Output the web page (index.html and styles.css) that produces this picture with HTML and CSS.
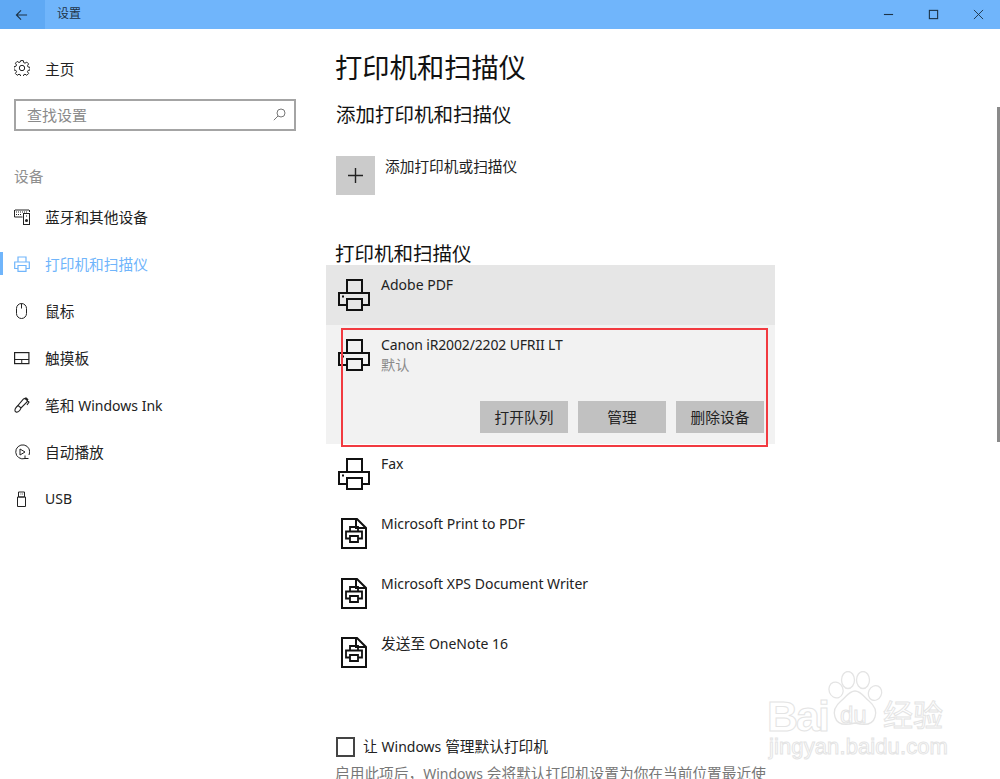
FILE: index.html
```html
<!DOCTYPE html>
<html lang="zh-CN">
<head>
<meta charset="utf-8">
<title>设置</title>
<link rel="stylesheet" href="styles.css">
</head>
<body>
<svg class="sprite" width="0" height="0" aria-hidden="true">
  <symbol id="printer" viewBox="0 0 32 32"><path d="M9 13V1h15v12M9 26H1V14h30v12h-7M9 20h15v11H9z" fill="none" stroke="currentColor" stroke-width="2"/><rect x="4" y="16.500" width="2" height="2" fill="currentColor"/></symbol>
  <symbol id="docprinter" viewBox="0 0 26 31"><path d="M1 1h15l9 9v20H1zM15 1v9h10" fill="none" stroke="currentColor" stroke-width="2"/><path d="M9 13.500V9h8v4.500M9 20.500H5v-7h16v7h-4M9 18h8v6H9z" fill="none" stroke="currentColor" stroke-width="1.800"/></symbol>
  <symbol id="smallprinter" viewBox="0 0 16 16"><path d="M4 6V1h8v5M4 12.500H.7V6h14.600v6.500H12M4 9.500h8v5.800H4z" fill="none" stroke="currentColor" stroke-width="1.200"/></symbol>
</svg>
<div class="window">
  <header class="titlebar">
    <div class="back"><svg class="back-icon" viewBox="0 0 14 12"><path d="M13 6H1.500M6.500 1 1.500 6l5 5" fill="none" stroke="currentColor" stroke-width="1.200"/></svg></div>
    <div class="win-title">设置</div>
    <div class="controls">
      <svg class="ctl" viewBox="0 0 12 12"><path d="M1 6h10" stroke="currentColor" stroke-width="1.200"/></svg>
      <svg class="ctl" viewBox="0 0 12 12"><rect x="1.500" y="1.500" width="9" height="9" fill="none" stroke="currentColor" stroke-width="1.200"/></svg>
      <svg class="ctl" viewBox="0 0 12 12"><path d="M1 1l10 10M11 1 1 11" stroke="currentColor" stroke-width="1"/></svg>
    </div>
  </header>
  <div class="layout">
    <nav class="sidebar">
      <div class="nav-item home">
        <svg class="nav-icon" viewBox="0 0 16 16"><path d="M6.700.6h2.600l.4 2 1.300.6 1.800-1.100 1.800 1.800-1.100 1.800.6 1.300 2 .4v2.600l-2 .4-.6 1.300 1.100 1.800-1.800 1.800-1.800-1.100-1.300.6-.4 2H6.700l-.4-2-1.300-.6-1.800 1.100-1.800-1.800 1.100-1.800-.6-1.300-2-.4V6.700l2-.4.6-1.300-1.100-1.800 1.800-1.800 1.800 1.100 1.300-.6z" fill="none" stroke="currentColor"/><circle cx="8" cy="8" r="2.700" fill="none" stroke="currentColor"/></svg>
        <span>主页</span>
      </div>
      <div class="search">
        <span class="search-text">查找设置</span>
        <svg class="search-icon" viewBox="0 0 13 13"><circle cx="8" cy="5" r="4" fill="none" stroke="currentColor"/><path d="M5 8 .8 12.200" stroke="currentColor"/></svg>
      </div>
      <div class="section-label">设备</div>
      <div class="nav-item">
        <svg class="nav-icon" viewBox="0 0 16 16"><path d="M1 1h14M.5 1v7h8M15.500 1v2" fill="none" stroke="currentColor"/><rect x="9.500" y="4.500" width="6" height="11" fill="none" stroke="currentColor"/><path d="M2 3h1M4 3h1M6 3h1M8 3h1M10 3h1M12 3h1M2 5.500h1M4 5.500h1M6 5.500h1" stroke="currentColor"/><circle cx="12.500" cy="11.500" r="1.500" fill="currentColor"/><rect x="12" y="6.500" width="1" height="1" fill="currentColor"/></svg>
        <span>蓝牙和其他设备</span>
      </div>
      <div class="nav-item active">
        <svg class="nav-icon" viewBox="0 0 16 16"><use href="#smallprinter"/></svg>
        <span>打印机和扫描仪</span>
      </div>
      <div class="nav-item">
        <svg class="nav-icon" viewBox="0 0 16 16"><path d="M7.500 5.500V.5M2.500 5.500a5 5 0 0 1 10 0v5a5 5 0 0 1-10 0z" fill="none" stroke="currentColor"/></svg>
        <span>鼠标</span>
      </div>
      <div class="nav-item">
        <svg class="nav-icon" viewBox="0 0 16 16"><rect x=".6" y="2.600" width="14.300" height="11" fill="none" stroke="currentColor" stroke-width="1.200"/><path d="M.5 9.500h14.500M7.750 9.500v4" stroke="currentColor" fill="none"/></svg>
        <span>触摸板</span>
      </div>
      <div class="nav-item">
        <svg class="nav-icon" viewBox="0 0 16 16"><path d="M9.500 2 12 .8 13.800 2.500 13 5 7 11l-3-2.500zM11 1.500l4 3.500-2 3M4 8.500 2.500 10c-2 2-2 4.500-.5 5s3-.5 4-2l1-2" fill="none" stroke="currentColor" stroke-width="1.100"/></svg>
        <span>笔和 <span class="latin">Windows Ink</span></span>
      </div>
      <div class="nav-item">
        <svg class="nav-icon" viewBox="0 0 16 16"><path d="M11 14.500a7 7 0 1 1 4-3.500M11 11.500v3h3.500" fill="none" stroke="currentColor"/><path d="M6 5l5 3-5 3z" fill="none" stroke="currentColor"/></svg>
        <span>自动播放</span>
      </div>
      <div class="nav-item">
        <svg class="nav-icon" viewBox="0 0 16 16"><path d="M4.500 1h6v5h-6zM3.500 6h8v9.500h-8zM6.500 3h.8M8.300 3h.8" fill="none" stroke="currentColor"/></svg>
        <span class="latin">USB</span>
      </div>
    </nav>
    <main class="content">
      <h1 class="page-title">打印机和扫描仪</h1>
      <h2 class="section-title">添加打印机和扫描仪</h2>
      <div class="add-row">
        <div class="add-box"><svg class="plus" viewBox="0 0 16 16"><path d="M8 0v16M0 8h16" stroke="currentColor" stroke-width="1.500"/></svg></div>
        <span class="add-text">添加打印机或扫描仪</span>
      </div>
      <h2 class="section-title list-title">打印机和扫描仪</h2>
      <div class="list">
        <div class="row hovered">
          <svg class="big-icon"><use href="#printer"/></svg>
          <div class="row-text"><div class="latin">Adobe PDF</div></div>
        </div>
        <div class="row expanded">
          <div class="row-main">
            <svg class="big-icon"><use href="#printer"/></svg>
            <div class="row-text"><div class="latin tight">Canon iR2002/2202 UFRII LT</div><div class="sub">默认</div></div>
          </div>
          <div class="actions">
            <div class="btn">打开队列</div>
            <div class="btn">管理</div>
            <div class="btn">删除设备</div>
          </div>
        </div>
        <div class="row short">
          <svg class="big-icon"><use href="#printer"/></svg>
          <div class="row-text"><div class="latin">Fax</div></div>
        </div>
        <div class="row doc">
          <svg class="doc-icon"><use href="#docprinter"/></svg>
          <div class="row-text"><div class="latin">Microsoft Print to PDF</div></div>
        </div>
        <div class="row doc">
          <svg class="doc-icon"><use href="#docprinter"/></svg>
          <div class="row-text"><div class="latin">Microsoft XPS Document Writer</div></div>
        </div>
        <div class="row doc">
          <svg class="doc-icon"><use href="#docprinter"/></svg>
          <div class="row-text"><div>发送至 <span class="latin">OneNote 16</span></div></div>
        </div>
        <div class="annotation"></div>
      </div>
      <label class="check-row"><span class="checkbox"></span><span>让 <span class="latin">Windows</span> 管理默认打印机</span></label>
      <p class="desc">启用此项后，<span class="latin">Windows</span> 会将默认打印机设置为你在当前位置最近使</p>
    </main>
  </div>
  <div class="scrollbar"></div>
  <div class="watermark">
    <svg class="paw" viewBox="0 0 56 58"><g fill="#fff" stroke="#e4e4e4" stroke-width="1.300"><ellipse cx="9" cy="19" rx="7" ry="8" transform="rotate(-20 9 19)"/><ellipse cx="21" cy="9" rx="6.500" ry="8.500"/><ellipse cx="36" cy="9" rx="6.500" ry="8.500"/><ellipse cx="48" cy="22" rx="6.500" ry="7.500" transform="rotate(25 48 22)"/><path d="M28 20c6 0 9 6 14 10 6 5 8 10 6 16-2 7-9 9-20 6-11 3-18 1-20-6-2-6 0-11 6-16 5-4 8-10 14-10z"/></g></svg>
    <span class="wm-bai">Bai</span>
    <span class="wm-du">du</span>
    <span class="wm-cn">经验</span>
    <span class="wm-url">jingyan.baidu.com</span>
  </div>
</div>
</body>
</html>
```
FILE: styles.css
```css
* { box-sizing: border-box; }
html, body { margin: 0; padding: 0; }
body { font-family: "Noto Sans", "Noto Sans CJK SC", sans-serif; color: #1a1a1a; background: #fff; }
.sprite { position: absolute; }
.window { position: relative; width: 1000px; height: 779px; overflow: hidden; background: #fff; }
.latin { font-size: 14px; }
.tight { letter-spacing: -.15px; }

.titlebar { display: flex; align-items: center; height: 29px; background: #70b5fb; color: #1d3347; }
.back { display: flex; align-items: center; justify-content: center; width: 45px; height: 29px; background: #5fa9f4; }
.back-icon { width: 13px; height: 12px; margin-left: -3px; }
.win-title { margin: -2px 0 0 12px; font-size: 12px; line-height: 29px; }
.controls { display: flex; margin-left: auto; gap: 34px; padding-right: 16px; }
.ctl { width: 11px; height: 11px; display: block; }

.layout { display: flex; }
.sidebar { width: 326px; padding-top: 16px; flex: none; }
.nav-item { display: flex; align-items: center; height: 47px; padding-left: 14px; gap: 15px; font-size: 14.700px; color: #222; position: relative; }
.nav-icon { width: 16px; height: 16px; flex: none; }
.nav-item.active { color: #70b5fb; }
.nav-item.active::before { content: ""; position: absolute; left: 0; top: 12px; width: 3px; height: 23px; background: #70b5fb; }
.home { height: 46px; }
.search { display: flex; align-items: center; justify-content: space-between; width: 282px; height: 32px; margin: 8px 0 0 14px; padding: 0 8px 2px 11px; border: 2px solid #a4a4a4; }
.search-text { font-size: 15px; color: #8a8a8a; }
.search-icon { width: 13px; height: 13px; color: #777; }
.section-label { margin: 33px 0 0 14px; font-size: 14.700px; line-height: 24px; color: #8f8f8f; }
.section-label + .nav-item { margin-top: 5px; }

.content { flex: 1; padding-left: 0; min-width: 0; }
.page-title { margin: 20px 0 0 9px; font-size: 27.300px; line-height: 38px; font-weight: 400; color: #111; }
.section-title { margin: 14px 0 0 10px; font-size: 19.500px; line-height: 28px; font-weight: 400; color: #111; }
.add-row { display: flex; align-items: flex-start; margin: 27px 0 0 10px; gap: 10px; }
.add-box { display: flex; align-items: center; justify-content: center; width: 39px; height: 39px; background: #cbcbcb; }
.plus { width: 15px; height: 15px; color: #222; }
.add-text { font-size: 14.700px; line-height: 20px; color: #222; }
.list-title { margin: 45px 0 0 9px; line-height: 28px; }
.list { position: relative; width: 449px; margin-top: -3px; }

.row { display: flex; align-items: flex-start; height: 60px; padding: 14px 0 0 12px; font-size: 14.700px; color: #222; }
.row.short { height: 59px; }
.row.doc { height: 59.500px; }
.row.hovered { background: #e6e6e6; }
.row.expanded { display: block; height: 119px; padding-top: 0; background: #f2f2f2; }
.row-main { display: flex; padding-top: 14px; height: 76px; }
.big-icon { width: 32px; height: 32px; flex: none; color: #111; }
.doc-icon { width: 26px; height: 31px; flex: none; margin: 1px 3px 0 3px; color: #111; }
.row-text { margin: -5px 0 0 11px; line-height: 22px; }
.doc .row-text { margin-top: -4px; }
.sub { font-size: 14.200px; line-height: 18px; color: #8a8a8a; }
.actions { display: flex; justify-content: flex-end; gap: 10px; padding-right: 11px; }
.btn { width: 88px; height: 32px; background: #c1c1c1; font-size: 14.700px; line-height: 32px; text-align: center; color: #222; }
.annotation { position: absolute; left: 15px; top: 63px; width: 427px; height: 119px; border: 2px solid #f23a40; }

.check-row { display: flex; align-items: center; gap: 8px; margin: 54.500px 0 0 10px; font-size: 14.700px; line-height: 20px; color: #222; }
.checkbox { width: 19px; height: 20px; border: 2px solid #444; }
.desc { margin: 5px 0 0 9px; font-size: 14.700px; line-height: 22px; color: #777; white-space: nowrap; }

.scrollbar { position: absolute; right: 0; top: 107px; width: 3px; height: 335px; background: #8a8a8a; }

.watermark { position: absolute; left: 766px; top: 671px; width: 190px; height: 108px; color: transparent; -webkit-text-stroke: 1px #e4e4e4; font-family: "Liberation Sans", "Noto Sans CJK SC", sans-serif; }
.paw { position: absolute; left: 61px; top: 0; width: 56px; height: 58px; }
.wm-bai { position: absolute; left: 1px; top: 25px; font-size: 43px; line-height: 40px; font-weight: 700; letter-spacing: -2px; }
.wm-du { position: absolute; left: 74px; top: 30px; font-size: 24px; line-height: 28px; }
.wm-cn { position: absolute; left: 117px; top: 26px; font-size: 30px; line-height: 38px; }
.wm-url { position: absolute; left: 3px; top: 65px; font-size: 22px; line-height: 22px; letter-spacing: .1px; white-space: nowrap; }
```
